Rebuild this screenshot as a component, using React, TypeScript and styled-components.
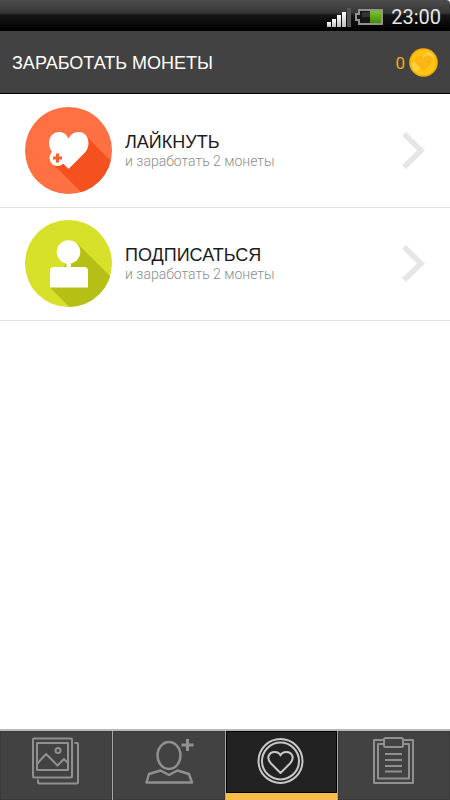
import React from "react";
import styled, { createGlobalStyle } from "styled-components";

const GlobalStyle = createGlobalStyle`
  *, *::before, *::after { box-sizing: border-box; }
  body { margin: 0; background: #fff; font-family: "Liberation Sans", Arial, sans-serif; }
  svg { display: block; flex: none; }
`;

const Screen = styled.div`
  min-height: 100vh;
  display: flex;
  flex-direction: column;
  background: #fff;
`;

const StatusBar = styled.div`
  height: 31px;
  padding: 3px 9px 0 0;
  display: flex;
  align-items: center;
  justify-content: flex-end;
  gap: 4px;
  background: linear-gradient(#4c4c4c 0, #363636 13px, #171717 15px, #000 30px);
  border-top-right-radius: 4px;
`;

const Clock = styled.time`
  margin-left: 4px;
  font: 20px/28px Roboto, sans-serif;
  color: #e6e6e6;
`;

const Header = styled.header`
  height: 63px;
  padding: 1px 12px 0;
  display: flex;
  align-items: center;
  justify-content: space-between;
  background: #424242;
  border-bottom: 1px solid #000;
`;

const Title = styled.h1`
  margin: 0;
  font-size: 18px;
  line-height: 24px;
  font-weight: 400;
  color: #fff;
`;

const Balance = styled.div`
  display: flex;
  align-items: center;
  gap: 4px;
  font: 17px/24px Roboto, sans-serif;
  color: #f0aa28;
`;

const List = styled.main`
  flex: 1;
  padding-top: 1px;
`;

const Row = styled.button`
  width: 100%;
  padding: 12px 25px 13px 25px;
  display: flex;
  align-items: center;
  gap: 13px;
  border: 0;
  border-bottom: 1px solid #e2e2e2;
  background: #fff;
  font-family: inherit;
  text-align: left;
  cursor: pointer;
`;

const RowText = styled.span`
  flex: 1;
  display: flex;
  flex-direction: column;
`;

const RowTitle = styled.span`
  font-size: 18px;
  line-height: 20px;
  color: #1c1c1c;
`;

const RowHint = styled.span`
  font: 300 14px/18px Roboto, sans-serif;
  color: #8c8c8c;
`;

const TabBar = styled.nav`
  display: flex;
  gap: 1px;
  border-top: 2px solid #b9b9b9;
  background: #a8a8a8;
`;

const Tab = styled.button<{ $active?: boolean }>`
  flex: 1;
  height: 69px;
  padding: 6px 0 0;
  display: flex;
  align-items: flex-start;
  justify-content: center;
  border: 0;
  border-bottom: ${(p) => (p.$active ? "7px solid #ffbb4a" : "0")};
  background: ${(p) => (p.$active ? "#222" : "#424242")};
  box-shadow: inset 0 0 0 1px ${(p) => (p.$active ? "#000" : "#3a3a3a")};
  color: ${(p) => (p.$active ? "#c8c8c8" : "#909090")};
  cursor: pointer;
`;

const SignalIcon = () => (
  <svg width="25" height="20" viewBox="0 0 25 20" aria-hidden="true">
    <defs>
      <linearGradient id="bars" x2="0" y2="1">
        <stop stopColor="#fff" />
        <stop offset="1" stopColor="#bdbdbd" />
      </linearGradient>
    </defs>
    <g fill="url(#bars)">
      <rect x="1" y="15" width="4" height="5" />
      <rect x="6" y="12" width="4" height="8" />
      <rect x="11" y="8" width="4" height="12" />
      <rect x="16" y="5" width="4" height="15" />
    </g>
    <rect x="21" y="1" width="4" height="19" fill="#555" />
  </svg>
);

const BatteryIcon = () => (
  <svg width="28" height="18" viewBox="0 0 28 18" aria-hidden="true">
    <defs>
      <linearGradient id="charge" x2="0" y2="1">
        <stop stopColor="#7cc52b" />
        <stop offset="1" stopColor="#3f8d0a" />
      </linearGradient>
    </defs>
    <path d="M4 2H27V16H4V12H1V6H4Z" fill="#161616" stroke="#929292" strokeWidth="2" />
    <rect x="7" y="4" width="9" height="5" fill="#333" />
    <rect x="15" y="3" width="11" height="12" fill="url(#charge)" />
  </svg>
);

const CoinIcon = () => (
  <svg width="29" height="29" viewBox="0 0 29 29" aria-hidden="true">
    <circle cx="14.5" cy="14.5" r="14.3" fill="#f9ad08" />
    <circle cx="14.5" cy="14.5" r="12.6" fill="#ffc414" />
    <path d="M2.3 16L20 3.5A12.4 12.4 0 0 1 25 8L6.5 24A12.4 12.4 0 0 1 2.3 16Z" fill="#ffd140" />
    <path d="M14.5 23.5L7.5 16C4.5 12.6 5.6 8 9.5 7.4C11.9 7 13.7 8.3 14.5 10C15.3 8.3 17.1 7 19.5 7.4C23.4 8 24.5 12.6 21.5 16Z" fill="#fdb515" />
  </svg>
);

const LikeIcon = () => (
  <svg width="87" height="87" viewBox="0 0 87 87" aria-hidden="true">
    <clipPath id="likeDisc"><circle cx="43.5" cy="43.5" r="43.5" /></clipPath>
    <g clipPath="url(#likeDisc)">
      <rect width="87" height="87" fill="#ff7043" />
      <path d="M61 29L95 63V95H66L27 56Z" fill="#f4511e" />
    </g>
    <path d="M43.5 62L28 46C25 42.5 24 39.5 24 36C24 29.5 28.5 25 34 25C38.5 25 42 27.5 43.5 31.7C45.2 27.5 49.5 25 53.5 25C59.5 25 63.5 29.5 63.5 36C63.5 40 62 43.5 59 46.5Z" fill="#fff" />
    <circle cx="32.5" cy="51" r="8" fill="#fff" />
    <path d="M32.5 46.5V55.5M28 51H37" stroke="#f4602f" strokeWidth="3.2" />
  </svg>
);

const FollowIcon = () => (
  <svg width="87" height="87" viewBox="0 0 87 87" aria-hidden="true">
    <clipPath id="followDisc"><circle cx="43.5" cy="43.5" r="43.5" /></clipPath>
    <g clipPath="url(#followDisc)">
      <rect width="87" height="87" fill="#d7e129" />
      <path d="M52 23L95 66V95H52.5L25 67.5L40 45Z" fill="#b5bf15" />
    </g>
    <g fill="#fff">
      <circle cx="43.5" cy="32" r="11.8" />
      <rect x="41.5" y="42" width="4.5" height="8" />
      <path d="M25 67.5V51Q25 47 29 47H59Q63 47 63 51V67.5Z" />
    </g>
  </svg>
);

const Chevron = () => (
  <svg width="25" height="40" viewBox="0 0 25 40" fill="none" aria-hidden="true">
    <path d="M4 3L21 19.5L4 36" stroke="#e6e6e6" strokeWidth="5.5" />
  </svg>
);

const TabIcon = ({ children }: { children: React.ReactNode }) => (
  <svg width="50" height="50" viewBox="0 0 50 50" fill="none" stroke="currentColor" strokeWidth="2" strokeLinejoin="round" aria-hidden="true">
    {children}
  </svg>
);

const GalleryIcon = () => (
  <TabIcon>
    <rect x="2" y="1.5" width="39" height="39" rx="1" />
    <rect x="6" y="6" width="31" height="27" />
    <path d="M6 27L15 17L26.5 28.5L33 22L37 26" />
    <circle cx="27" cy="13.5" r="2.5" />
    <path d="M43.5 6H46Q47 6 47 7V45Q47 46.5 45.5 46.5H8.5Q7 46.5 7 45V42.5" />
  </TabIcon>
);

const AddUserIcon = () => (
  <TabIcon>
    <ellipse cx="25" cy="18.5" rx="11.5" ry="13.5" strokeWidth="2.5" />
    <path d="M2.5 45.5L5 37L16.5 33.5L25 38L33.5 33.5L45 37L48 45.5Z" strokeWidth="2.5" />
    <path d="M43.5 2V14M37.5 8H49.5" strokeWidth="3" />
  </TabIcon>
);

const HeartIcon = () => (
  <TabIcon>
    <circle cx="24.5" cy="24" r="22" />
    <circle cx="24.5" cy="24" r="18.5" />
    <path d="M24.500 36L15 26.500C9.500 20.500 13.500 15 18.500 15C21.500 15 23.700 16.500 24.500 18.500C25.300 16.500 27.500 15 30.500 15C35.500 15 39.500 20.500 34 26.500Z" />
  </TabIcon>
);

const ClipboardIcon = () => (
  <TabIcon>
    <path d="M15 3H5V46H44V3H34" />
    <path d="M15 7H9V41.5H40V7H34" />
    <rect x="15" y="1" width="19" height="9" rx="1.5" />
    <path d="M16 17H33M16 23H33M16 29H33M16 34.5H33" strokeWidth="1.8" />
  </TabIcon>
);

const tasks = [
  { title: "ЛАЙКНУТЬ", Icon: LikeIcon },
  { title: "ПОДПИСАТЬСЯ", Icon: FollowIcon },
];

const tabs = [
  { label: "Фотографии", Icon: GalleryIcon },
  { label: "Подписчики", Icon: AddUserIcon },
  { label: "Заработать монеты", Icon: HeartIcon, active: true },
  { label: "Заказы", Icon: ClipboardIcon },
];

export default function App() {
  return (
    <Screen>
      <GlobalStyle />
      <StatusBar>
        <SignalIcon />
        <BatteryIcon />
        <Clock>23:00</Clock>
      </StatusBar>
      <Header>
        <Title>ЗАРАБОТАТЬ МОНЕТЫ</Title>
        <Balance>
          <span>0</span>
          <CoinIcon />
        </Balance>
      </Header>
      <List>
        {tasks.map(({ title, Icon }) => (
          <Row key={title} type="button">
            <Icon />
            <RowText>
              <RowTitle>{title}</RowTitle>
              <RowHint>и заработать 2 монеты</RowHint>
            </RowText>
            <Chevron />
          </Row>
        ))}
      </List>
      <TabBar>
        {tabs.map(({ label, Icon, active }) => (
          <Tab key={label} type="button" aria-label={label} aria-current={active ? "page" : undefined} $active={active}>
            <Icon />
          </Tab>
        ))}
      </TabBar>
    </Screen>
  );
}
